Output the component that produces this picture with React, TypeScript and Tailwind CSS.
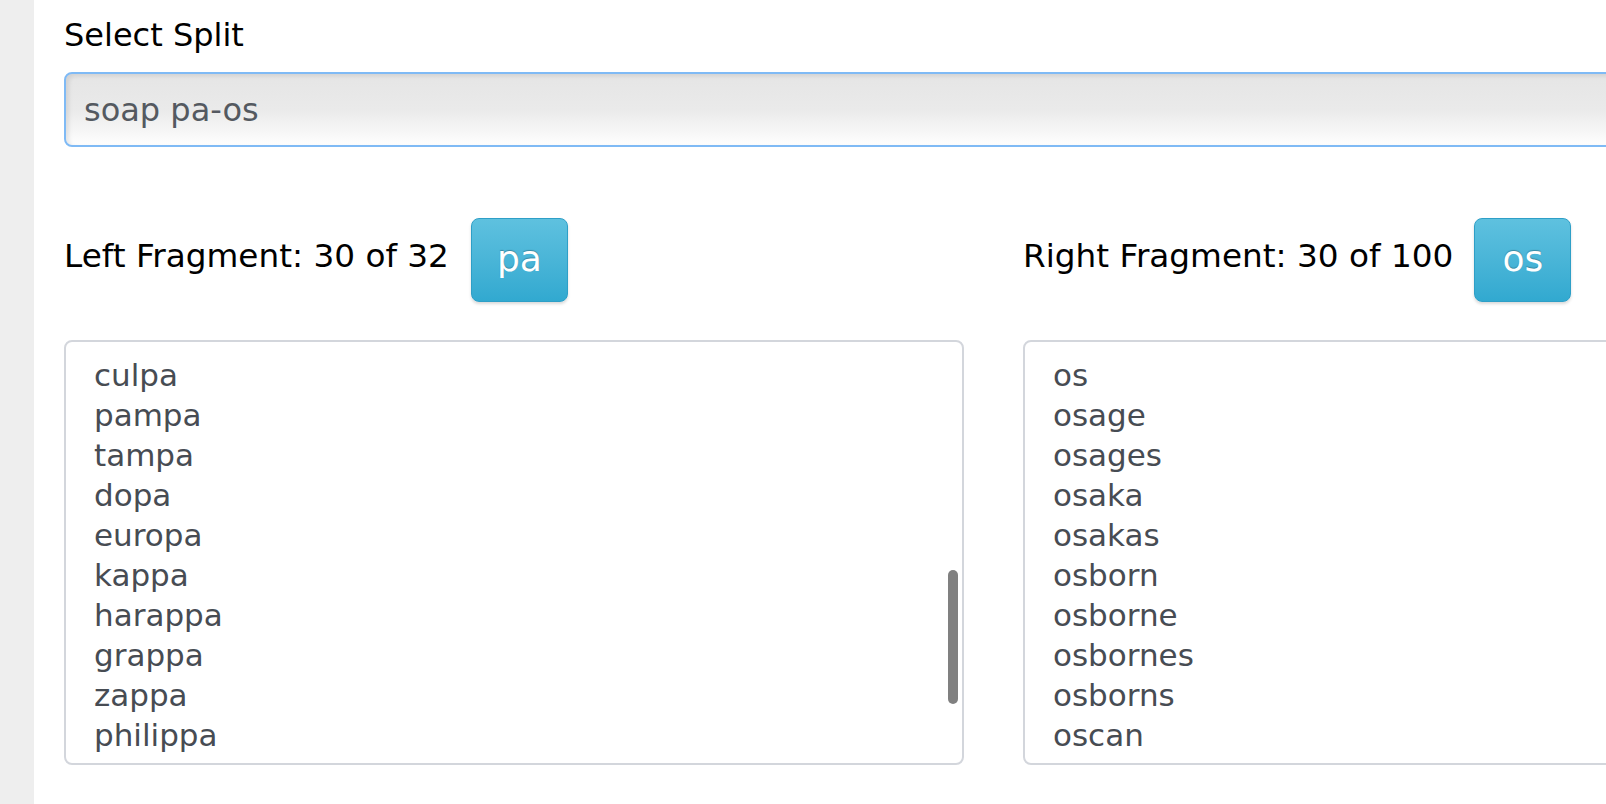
import React from "react";

const leftWords = ["culpa", "pampa", "tampa", "dopa", "europa", "kappa", "harappa", "grappa", "zappa", "philippa"];
const rightWords = ["os", "osage", "osages", "osaka", "osakas", "osborn", "osborne", "osbornes", "osborns", "oscan"];

const FragmentButton = ({ label }: { label: string }) => (
  <button className="h-[84px] w-[97px] shrink-0 rounded-[8px] border border-[#2e9fc7] bg-gradient-to-b from-[#5ec1df] to-[#31a9d0] pb-[2px] text-[36px] leading-none text-white shadow-[0_2px_3px_rgba(0,0,0,0.15)] [text-shadow:0_-1px_1px_rgba(0,0,0,0.25)]">
    {label}
  </button>
);

const WordList = ({ words, thumb }: { words: string[]; thumb?: boolean }) => (
  <div className="relative h-[425px] overflow-hidden rounded-[8px] border-2 border-[#d3d6dc] bg-white pt-[13px] pl-[28px]">
    {words.map((w) => (
      <div key={w} className="text-[31px] leading-[40px] text-[#474c53]">
        {w}
      </div>
    ))}
    {thumb && (
      <div className="absolute right-[4px] top-[228px] h-[134px] w-[10px] rounded-full bg-[#808080]" />
    )}
  </div>
);

export default function App() {
  return (
    <div className="flex h-screen overflow-hidden bg-white font-['DejaVu_Sans',Verdana,sans-serif]">
      <div className="w-[34px] shrink-0 bg-[#eeeeee]" />
      <div className="w-[1889px] shrink-0 pl-[30px] pt-[15px]">
        <div className="text-[32px] leading-[40px] text-black">Select Split</div>

        <div className="mt-[17px] flex h-[75px] items-center rounded-[8px] border-2 border-[#7fbaf5] bg-gradient-to-b from-[#e5e5e5] via-[#eaeaea] to-[#fefefe] pl-[18px] text-[32px] text-[#545960] shadow-[inset_3px_2px_4px_rgba(0,0,0,0.09)]">
          soap pa-os
        </div>

        <div className="mt-[71px] grid grid-cols-[900px_900px] gap-x-[59px]">
          <div className="flex h-[84px] items-center gap-[22px]">
            <span className="pb-[6px] text-[32.7px] text-black">Left Fragment: 30 of 32</span>
            <FragmentButton label="pa" />
          </div>
          <div className="flex h-[84px] items-center gap-[21px]">
            <span className="pb-[6px] text-[32.7px] text-black">Right Fragment: 30 of 100</span>
            <FragmentButton label="os" />
          </div>

          <div className="mt-[38px]">
            <WordList words={leftWords} thumb />
          </div>
          <div className="mt-[38px]">
            <WordList words={rightWords} />
          </div>
        </div>
      </div>
    </div>
  );
}
